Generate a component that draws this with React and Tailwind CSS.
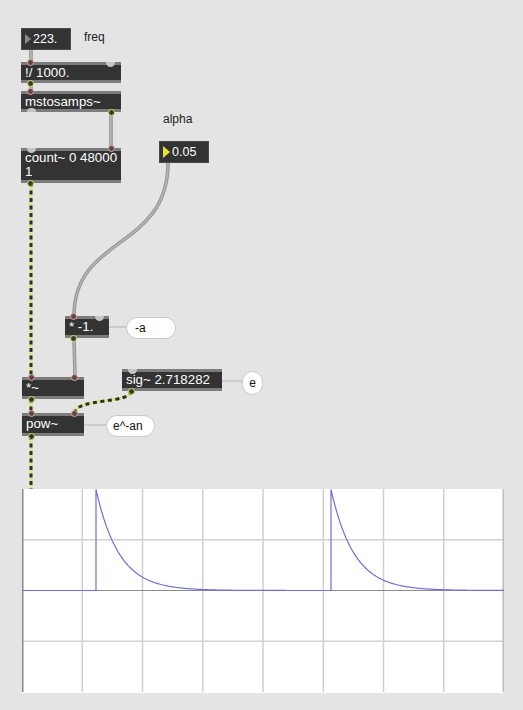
import React from 'react';

const font = "font-['Liberation_Sans',Arial,sans-serif]";

// tiny port markers on the object strips (positions are relative to the padding box, inside the 3px strips)
const InOn = ({ className }) => (
    <span className={`absolute -top-[6.5px] w-[7px] h-[7px] rounded-full border-[1.5px] border-[#e6a39a] bg-[#5a4848] ${className}`} />
);
const InOff = ({ className }) => (
    <span className={`absolute -top-[3px] w-[9px] h-[4.5px] rounded-b-full bg-[#c4c4c4] ${className}`} />
);
const OutOn = ({ className }) => (
    <span className={`absolute -bottom-[6.5px] w-[7px] h-[7px] rounded-full border-[1.5px] border-[#d7e46c] bg-[#3a3a2a] ${className}`} />
);
const OutOff = ({ className }) => (
    <span className={`absolute -bottom-[3px] w-[9px] h-[4.5px] rounded-t-full bg-[#c4c4c4] ${className}`} />
);

const Obj = ({ className, children }) => (
    <div className={`absolute bg-[#333333] border-y-[3px] border-[#7c7c7c] text-white text-[13.3px] leading-[15px] px-[4px] whitespace-nowrap ${className}`}>
        {children}
    </div>
);

const Bubble = ({ className, children }) => (
    <div className={`absolute bg-white border border-[#c9c9c9] rounded-full text-[12px] leading-[20px] text-[#111] ${className}`}>
        {children}
    </div>
);

const Scope = () => {
    const W = 482, H = 203, mid = 101.5;
    const spikes = [74, 309];
    let d = `M0,${mid}`;
    for (let x = 0; x <= W; x++) {
        const past = spikes.filter(s => s <= x);
        if (spikes.includes(x)) {
            d += ` L${x},${mid} L${x},0.5`;
            continue;
        }
        if (!past.length) {
            d += ` L${x},${mid}`;
        } else {
            const s = past[past.length - 1];
            d += ` L${x},${(mid - (mid - 0.5) * Math.exp(-(x - s) / 23)).toFixed(2)}`;
        }
    }
    const vx = [1, 2, 3, 4, 5, 6, 7].map(i => i * 60.25);
    return (
        <div className="absolute left-[22px] top-[489px] w-[482px] h-[204px] bg-white">
            <svg width="482" height="204" className="block">
                {vx.map(x => <line key={x} x1={x} y1="0" x2={x} y2={H} stroke="#cfcfcf" strokeWidth="1.5" />)}
                <line x1="0" y1="50.75" x2={W} y2="50.75" stroke="#d2d2d2" strokeWidth="1.5" />
                <line x1="0" y1="152.25" x2={W} y2="152.25" stroke="#d2d2d2" strokeWidth="1.5" />
                <line x1="0" y1={mid} x2={W} y2={mid} stroke="#8c8c8c" strokeWidth="1.2" />
                <line x1="0.75" y1="0" x2="0.75" y2={H} stroke="#8a8a8a" strokeWidth="1.5" />
                <line x1="481.25" y1="0" x2="481.25" y2={H} stroke="#bdbdbd" strokeWidth="1.5" />
                <path d={d} fill="none" stroke="#6f6fd8" strokeWidth="1.2" />
            </svg>
        </div>
    );
};

const ctl = ['M31,50 L31,63', 'M31,83 L31,91', 'M111,112 L111,148', 'M168,163 C168,250 74,235 74,316', 'M74,338 L75,377'];
const sig = ['M31,183 L31,377', 'M31,399 L31,413', 'M131,391 C131,404 75,398 75,413', 'M31,436 L31,489'];
const notes = ['M109,327 L126,327', 'M222,381 L242,381', 'M84,425 L106,425'];

const Cords = () => (
    <svg className="absolute left-0 top-0" width="523" height="710">
        {notes.map(d => <path key={d} d={d} fill="none" stroke="#c4c4c4" strokeWidth="1.5" />)}
        {ctl.map(d => (
            <g key={d}>
                <path d={d} fill="none" stroke="#8e8e8e" strokeWidth="3.5" />
                <path d={d} fill="none" stroke="#b3b3b3" strokeWidth="1.8" />
            </g>
        ))}
        {sig.map(d => (
            <g key={d}>
                <path d={d} fill="none" stroke="#d8e786" strokeWidth="3" />
                <path d={d} fill="none" stroke="#2e2e2e" strokeWidth="3" strokeDasharray="4 3.5" />
            </g>
        ))}
    </svg>
);

export default function App() {
    return (
        <div className={`relative w-[523px] h-[710px] overflow-hidden bg-[#e4e4e4] ${font}`}>
            <Cords />

            {/* number boxes */}
            <div className="absolute left-[21px] top-[28px] w-[50px] h-[22px] bg-[#333333] border border-[#4a4a4a] flex items-center text-white text-[12.5px]">
                <span className="ml-[3px] w-0 h-0 border-y-[5px] border-y-transparent border-l-[6px] border-l-[#8a8a8a]" />
                <span className="ml-[2px]">223.</span>
            </div>
            <div className="absolute left-[84px] top-[30px] text-[12px] leading-[15px] text-[#222]">freq</div>

            <div className="absolute left-[163px] top-[112px] text-[12px] leading-[15px] text-[#222]">alpha</div>
            <div className="absolute left-[159px] top-[141px] w-[50px] h-[22px] bg-[#333333] border border-[#4a4a4a] flex items-center text-white text-[12.5px]">
                <span className="ml-[3px] w-0 h-0 border-y-[6px] border-y-transparent border-l-[7px] border-l-[#e9e233]" />
                <span className="ml-[2px]">0.05</span>
            </div>

            <Obj className="left-[21px] top-[62px] w-[100px] h-[21px]">
                !/ 1000.
                <InOn className="left-[6px]" />
                <InOff className="right-[6px]" />
                <OutOn className="left-[6px]" />
            </Obj>

            <Obj className="left-[21px] top-[91px] w-[100px] h-[21px]">
                mstosamps~
                <InOn className="left-[6px]" />
                <OutOff className="left-[6px]" />
                <OutOn className="right-[6px]" />
            </Obj>

            <Obj className="left-[21px] top-[148px] w-[100px] h-[35px] !leading-[14px] flex flex-col">
                <span>count~ 0 48000</span>
                <span>1</span>
                <InOff className="left-[6px]" />
                <InOn className="right-[6px]" />
                <OutOn className="left-[6px]" />
            </Obj>

            <Obj className="left-[65px] top-[316px] w-[44px] h-[22px]">
                * -1.
                <InOn className="left-[5px]" />
                <InOff className="right-[5px]" />
                <OutOn className="left-[5px]" />
            </Obj>
            <Bubble className="left-[126px] top-[317px] w-[50px] h-[22px] pl-[8px]">-a</Bubble>

            <Obj className="left-[22px] top-[377px] w-[62px] h-[22px]">
                *~
                <InOn className="left-[6px]" />
                <InOn className="right-[6px]" />
                <OutOn className="left-[6px]" />
            </Obj>

            <Obj className="left-[122px] top-[369px] w-[100px] h-[22px]">
                sig~ 2.718282
                <InOff className="left-[6px]" />
                <OutOn className="left-[6px]" />
            </Obj>
            <Bubble className="left-[242px] top-[371px] w-[21px] h-[24px] !leading-[22px] text-center">e</Bubble>

            <Obj className="left-[22px] top-[413px] w-[62px] h-[23px]">
                pow~
                <InOn className="left-[6px]" />
                <InOn className="right-[6px]" />
                <OutOn className="left-[6px]" />
            </Obj>
            <Bubble className="left-[106px] top-[415px] w-[49px] h-[22px] pl-[6px]">e^-an</Bubble>

            <Scope />
        </div>
    );
}
